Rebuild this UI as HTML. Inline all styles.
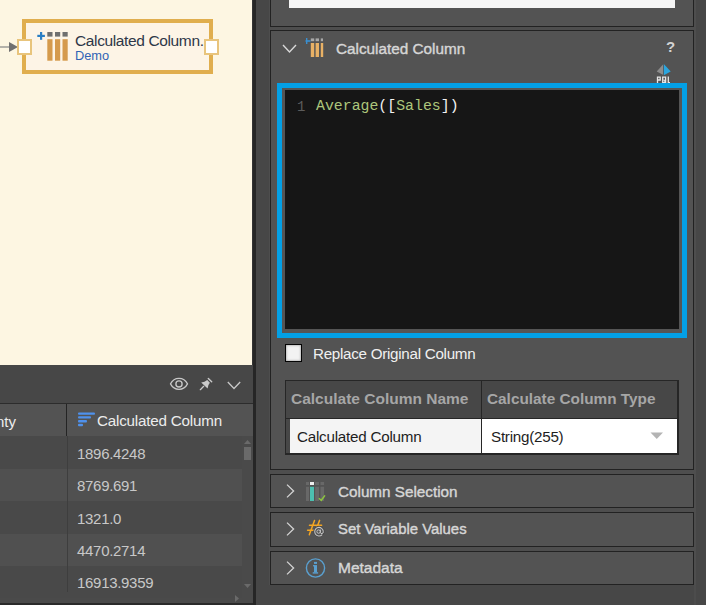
<!DOCTYPE html>
<html><head><meta charset="utf-8">
<style>
*{margin:0;padding:0;box-sizing:border-box}
html,body{width:706px;height:605px;overflow:hidden;background:#474747;font-family:"Liberation Sans",sans-serif}
.a{position:absolute}
.t{position:absolute;white-space:nowrap;line-height:1}
</style></head><body>
<!-- left canvas -->
<div class="a" style="left:0;top:0;width:252px;height:365px;background:#fdf6e2"></div>
<!-- arrow -->
<div class="a" style="left:0;top:46px;width:10px;height:2px;background:#b4b2aa"></div>
<svg class="a" style="left:9px;top:42px" width="9" height="10"><polygon points="0,0 9,5 0,10" fill="#707070"/></svg>
<!-- node -->
<div class="a" style="left:22px;top:19px;width:191px;height:55px;border:4px solid #e0ae4e;background:#fdf4e6"></div>
<div class="a" style="left:17px;top:39px;width:15px;height:16px;border:2px solid #e8c47c;background:#fff;z-index:2"></div>
<div class="a" style="left:204px;top:39px;width:15px;height:16px;border:2px solid #e8c47c;background:#fff;z-index:2"></div>
<svg class="a" style="left:36px;top:31px" width="34" height="32">
 <rect x="1.3" y="3.8" width="7.6" height="2.2" fill="#2a7ec4"/>
 <rect x="4" y="1" width="2.2" height="7.8" fill="#2a7ec4"/>
 <rect x="11.3" y="1" width="5.2" height="4.6" fill="#6f6f6f"/>
 <rect x="19" y="1" width="5.2" height="4.6" fill="#6f6f6f"/>
 <rect x="26.5" y="1" width="5.2" height="4.6" fill="#6f6f6f"/>
 <rect x="11.3" y="8.2" width="5.2" height="21.5" fill="#d59a4c"/>
 <rect x="19" y="8.2" width="5.2" height="21.5" fill="#d59a4c"/>
 <rect x="26.5" y="8.2" width="5.2" height="21.5" fill="#d59a4c"/>
</svg>
<div class="t" style="left:75px;top:33px;font-size:15.5px;letter-spacing:-0.37px;color:#2e3748">Calculated Column..</div>
<div class="t" style="left:75px;top:50px;font-size:12.8px;color:#2f63b5">Demo</div>

<!-- left grid -->
<div class="a" style="left:0;top:365px;width:253px;height:240px;background:#4a4a4a"></div>
<div class="a" style="left:0;top:365px;width:253px;height:38px;background:#474747"></div>
<div class="a" style="left:0;top:403px;width:253px;height:1px;background:#2c2c2c"></div>
<div class="a" style="left:0;top:404px;width:253px;height:32px;background:#535353"></div>
<div class="a" style="left:66px;top:404px;width:1px;height:32px;background:#242424"></div>
<div class="a" style="left:0;top:436px;width:242px;height:33px;background:#494949"></div>
<div class="a" style="left:0;top:469px;width:242px;height:32px;background:#505050"></div>
<div class="a" style="left:0;top:501px;width:242px;height:33px;background:#494949"></div>
<div class="a" style="left:0;top:534px;width:242px;height:32px;background:#505050"></div>
<div class="a" style="left:0;top:566px;width:242px;height:32px;background:#494949"></div>
<div class="a" style="left:67px;top:436px;width:1px;height:156px;background:#3e3e3e"></div>
<div class="a" style="left:0;top:603px;width:253px;height:2px;background:#2a2a2a"></div>
<div class="t" style="left:-4px;top:414px;font-size:15px;color:#ececec">nty</div>
<svg class="a" style="left:78px;top:412px" width="18" height="15">
 <rect x="0" y="0.4" width="17" height="2.4" rx="1" fill="#4f91ec"/>
 <rect x="0" y="4.2" width="13" height="2.4" rx="1" fill="#4f91ec"/>
 <rect x="0" y="8" width="9" height="2.4" rx="1" fill="#4f91ec"/>
 <rect x="0" y="11.8" width="5" height="2.4" rx="1" fill="#4f91ec"/>
</svg>
<div class="t" style="left:97px;top:413px;font-size:15.2px;letter-spacing:-0.2px;color:#ececec">Calculated Column</div>
<div class="t" style="left:77px;top:446px;font-size:15px;letter-spacing:-0.3px;color:#c8c8c8">1896.4248</div>
<div class="t" style="left:77px;top:478px;font-size:15px;letter-spacing:-0.3px;color:#c8c8c8">8769.691</div>
<div class="t" style="left:77px;top:511px;font-size:15px;letter-spacing:-0.3px;color:#c8c8c8">1321.0</div>
<div class="t" style="left:77px;top:543px;font-size:15px;letter-spacing:-0.3px;color:#c8c8c8">4470.2714</div>
<div class="t" style="left:77px;top:575px;font-size:15px;letter-spacing:-0.3px;color:#c8c8c8">16913.9359</div>
<!-- scrollbar -->
<svg class="a" style="left:244px;top:440px" width="8" height="5"><polygon points="0,4 3.5,0 7,4" fill="#6a6a6a"/></svg>
<div class="a" style="left:244px;top:447px;width:7px;height:13px;background:#6a6a6a"></div>
<svg class="a" style="left:244px;top:584px" width="8" height="5"><polygon points="0,0 3.5,4 7,0" fill="#6a6a6a"/></svg>
<svg class="a" style="left:235px;top:595px" width="5" height="7"><polygon points="0,0 4,3.5 0,7" fill="#6a6a6a"/></svg>
<!-- toolbar icons -->
<svg class="a" style="left:169px;top:376px" width="20" height="16">
 <path d="M1.5 7.9 C5.2 0.6, 14.8 0.6, 18.5 7.9 C14.8 15.2, 5.2 15.2, 1.5 7.9 Z" fill="none" stroke="#c8c8c8" stroke-width="1.25"/>
 <circle cx="10" cy="7.9" r="3.1" fill="none" stroke="#c8c8c8" stroke-width="1.35"/>
</svg>
<svg class="a" style="left:196px;top:374px" width="20" height="20">
 <path d="M12.3 4.4 L15.7 7.8" stroke="#cacaca" stroke-width="1.4" stroke-linecap="round"/>
 <path d="M11.2 6.1 Q8.8 8.3 5.2 8.4 L11.6 14.6 Q11.7 11.1 13.9 8.8 Z" fill="#cacaca"/>
 <path d="M7.7 12.3 L4.3 15.7" stroke="#cacaca" stroke-width="1.25" stroke-linecap="round"/>
</svg>
<svg class="a" style="left:227px;top:381px" width="15" height="10">
 <path d="M0.8 1 L7 7.5 L13.2 1" fill="none" stroke="#c8c8c8" stroke-width="1.3"/>
</svg>

<!-- divider stripe -->
<div class="a" style="left:252px;top:0;width:1px;height:365px;background:#343434"></div>
<div class="a" style="left:253px;top:0;width:3px;height:605px;background:#262626"></div>

<!-- right panel container -->
<div class="a" style="left:269px;top:0;width:427px;height:585px;background:#4e4e4e"></div>
<div class="a" style="left:694px;top:585px;width:2px;height:20px;background:#4c4c4c"></div>

<!-- panel 1 -->
<div class="a" style="left:270px;top:-10px;width:424px;height:37px;border:1px solid #222;background:#535353"></div>
<div class="a" style="left:289px;top:0;width:386px;height:8px;background:#f5f5f5"></div>

<!-- panel 2 -->
<div class="a" style="left:270px;top:30px;width:424px;height:440px;border:1px solid #222;background:#535353"></div>
<svg class="a" style="left:282px;top:43px" width="16" height="12">
 <path d="M1 2 L7.5 9 L14 2" fill="none" stroke="#d8d8d8" stroke-width="1.4"/>
</svg>
<svg class="a" style="left:305px;top:37px" width="20" height="22">
 <rect x="0.5" y="3.2" width="5" height="1.6" fill="#3a8fd0"/>
 <rect x="1" y="1" width="1.4" height="6" fill="#3a8fd0"/>
 <rect x="5.8" y="1.4" width="3.4" height="2.8" fill="#a8a8a8"/>
 <rect x="10.6" y="1.4" width="3.4" height="2.8" fill="#a8a8a8"/>
 <rect x="15.8" y="1.4" width="2.2" height="2.8" fill="#a8a8a8"/>
 <rect x="5.8" y="6" width="3.4" height="14" fill="#e8b165"/>
 <rect x="10.6" y="6" width="3.4" height="14" fill="#e8b165"/>
 <rect x="15.8" y="6" width="2.4" height="14" fill="#e8b165"/>
</svg>
<div class="t" style="left:336px;top:41px;font-size:15.3px;-webkit-text-stroke:0.4px #d6d6d6;color:#d6d6d6">Calculated Column</div>
<div class="t" style="left:666px;top:39px;font-size:15px;font-weight:bold;color:#d4d4d4">?</div>
<svg class="a" style="left:652px;top:60px" width="24" height="23">
 <polygon points="4.7,11.4 11,4.5 11,14.8" fill="#8c8c8c"/>
 <polygon points="11.8,4.1 18.7,11.4 11.8,15.3" fill="#2ba5de"/>
 <path d="M5.5 23 L5.5 17.2 L8.2 17.2 L8.2 20 L5.5 20" fill="none" stroke="#e6e6e6" stroke-width="1.3"/>
 <path d="M10.7 17.2 L13.6 17.2 L13.6 22.6 L10.7 22.6 Z" fill="none" stroke="#e6e6e6" stroke-width="1.3"/>
 <path d="M11.6 19.6 L13 21.6" stroke="#e6e6e6" stroke-width="1.2"/>
 <path d="M16.3 16.6 L16.3 22.6 L18 22.6" fill="none" stroke="#e6e6e6" stroke-width="1.3"/>
</svg>

<!-- editor -->
<div class="a" style="left:277px;top:83px;width:410px;height:255px;background:#03a0e6"></div>
<div class="a" style="left:282px;top:88px;width:400px;height:245px;background:#555"></div>
<div class="a" style="left:285px;top:90px;width:394px;height:239px;background:#161616"></div>
<div class="t" style="left:297px;top:100px;font-family:'Liberation Mono',monospace;font-size:14px;color:#5c5c5c">1</div>
<div class="t" style="left:316px;top:99px;font-family:'Liberation Mono',monospace;font-size:14.85px;color:#adc67c">Average<span style="color:#f2f2f2">([</span>Sales<span style="color:#f2f2f2">])</span></div>

<!-- checkbox -->
<div class="a" style="left:285px;top:344px;width:17px;height:18px;border:1px solid #050505;background:#f2f2f2;box-shadow:inset 0 0 2px 0.5px rgba(0,0,0,0.3)"></div>
<div class="t" style="left:313px;top:346px;font-size:15.2px;letter-spacing:-0.28px;color:#f0f0f0">Replace Original Column</div>

<!-- table -->
<div class="a" style="left:285px;top:380px;width:394px;height:75px;background:#262626"></div>
<div class="a" style="left:286px;top:381px;width:391px;height:37px;background:#474747"></div>
<div class="a" style="left:286px;top:419px;width:195px;height:34px;background:#474747"></div>
<div class="a" style="left:290px;top:419px;width:191px;height:34px;background:#f4f4f4"></div>
<div class="a" style="left:482px;top:419px;width:195px;height:34px;background:#fff"></div>
<div class="a" style="left:481px;top:381px;width:1px;height:37px;background:#262626"></div>
<div class="t" style="left:291px;top:391px;font-size:15.5px;font-weight:bold;color:#a6a6a6">Calculate Column Name</div>
<div class="t" style="left:487px;top:391px;font-size:15.35px;font-weight:bold;color:#a6a6a6">Calculate Column Type</div>
<div class="t" style="left:297px;top:429px;font-size:15.2px;letter-spacing:-0.23px;color:#1e1e1e">Calculated Column</div>
<div class="t" style="left:491px;top:429px;font-size:15.2px;letter-spacing:-0.25px;color:#1e1e1e">String(255)</div>
<svg class="a" style="left:650px;top:432px" width="14" height="8"><polygon points="0.5,0.5 13,0.5 6.75,7" fill="#b4b4b4"/></svg>

<!-- panel 3 -->
<div class="a" style="left:270px;top:474px;width:424px;height:34px;border:1px solid #222;background:#535353"></div>
<svg class="a" style="left:285px;top:483px" width="11" height="17"><path d="M2 1.6 L8.6 8 L2 14.4" fill="none" stroke="#d4d4d4" stroke-width="1.3"/></svg>
<svg class="a" style="left:302px;top:478px" width="26" height="26">
 <rect x="4" y="4" width="3" height="3" fill="#686868"/>
 <rect x="8" y="4" width="4" height="3" fill="#eeeeee"/>
 <rect x="13.1" y="4" width="3.9" height="3" fill="#686868"/>
 <rect x="18.5" y="4" width="3.6" height="3" fill="#686868"/>
 <rect x="4" y="8.8" width="3" height="14.2" fill="#686868"/>
 <rect x="8" y="8.8" width="4" height="14.2" fill="#4cbfb0"/>
 <rect x="13.1" y="8.8" width="3.9" height="14.2" fill="#686868"/>
 <rect x="18.5" y="8.8" width="3.6" height="14.2" fill="#686868"/>
 <path d="M16.8 20.2 L19.3 22.3 L23 17.4" fill="none" stroke="#8dc63f" stroke-width="1.5"/>
</svg>
<div class="t" style="left:338px;top:484px;font-size:15.25px;-webkit-text-stroke:0.4px #d6d6d6;color:#d6d6d6">Column Selection</div>

<!-- panel 4 -->
<div class="a" style="left:270px;top:512px;width:424px;height:35px;border:1px solid #222;background:#535353"></div>
<svg class="a" style="left:285px;top:521px" width="11" height="17"><path d="M2 1.6 L8.6 8 L2 14.4" fill="none" stroke="#d4d4d4" stroke-width="1.3"/></svg>
<svg class="a" style="left:302px;top:515px" width="26" height="26">
 <path d="M12.5 5.4 L7.3 19.8 M17.6 5.4 L14.8 12.5 M7.5 10.3 L19.6 10.3 M5.6 15.3 L12 15.3" fill="none" stroke="#f5a623" stroke-width="1.5" stroke-linecap="round"/>
 <circle cx="17" cy="16.5" r="5.2" fill="#535353" stroke="#484848" stroke-width="1"/>
 <path d="M20.2 19.6 A4.3 4.3 0 1 1 21.3 16.8" fill="none" stroke="#c4c4c4" stroke-width="1.1"/>
 <circle cx="16.6" cy="16.6" r="1.7" fill="none" stroke="#c4c4c4" stroke-width="1"/>
 <path d="M18.4 14.6 L18.4 17.4 Q18.6 18.8 20 18.6 Q21.3 18.3 21.3 16.8" fill="none" stroke="#c4c4c4" stroke-width="1"/>
</svg>
<div class="t" style="left:338px;top:522px;font-size:14.9px;-webkit-text-stroke:0.4px #d6d6d6;color:#d6d6d6">Set Variable Values</div>

<!-- panel 5 -->
<div class="a" style="left:270px;top:551px;width:424px;height:34px;border:1px solid #222;background:#535353"></div>
<svg class="a" style="left:285px;top:560px" width="11" height="17"><path d="M2 1.6 L8.6 8 L2 14.4" fill="none" stroke="#d4d4d4" stroke-width="1.3"/></svg>
<svg class="a" style="left:302px;top:555px" width="26" height="26">
 <circle cx="13.5" cy="13" r="9.1" fill="none" stroke="#5aa0d0" stroke-width="1.4"/>
 <rect x="12" y="6.9" width="3" height="2" fill="#5aa0d0"/>
 <rect x="12" y="10.1" width="3" height="7.3" fill="#5aa0d0"/>
 <rect x="11" y="10.1" width="1.5" height="1.3" fill="#5aa0d0"/>
 <rect x="10.7" y="17.2" width="5.4" height="1.4" fill="#5aa0d0"/>
</svg>
<div class="t" style="left:338px;top:560px;font-size:15.5px;-webkit-text-stroke:0.4px #d6d6d6;color:#d6d6d6">Metadata</div>
</body></html>
